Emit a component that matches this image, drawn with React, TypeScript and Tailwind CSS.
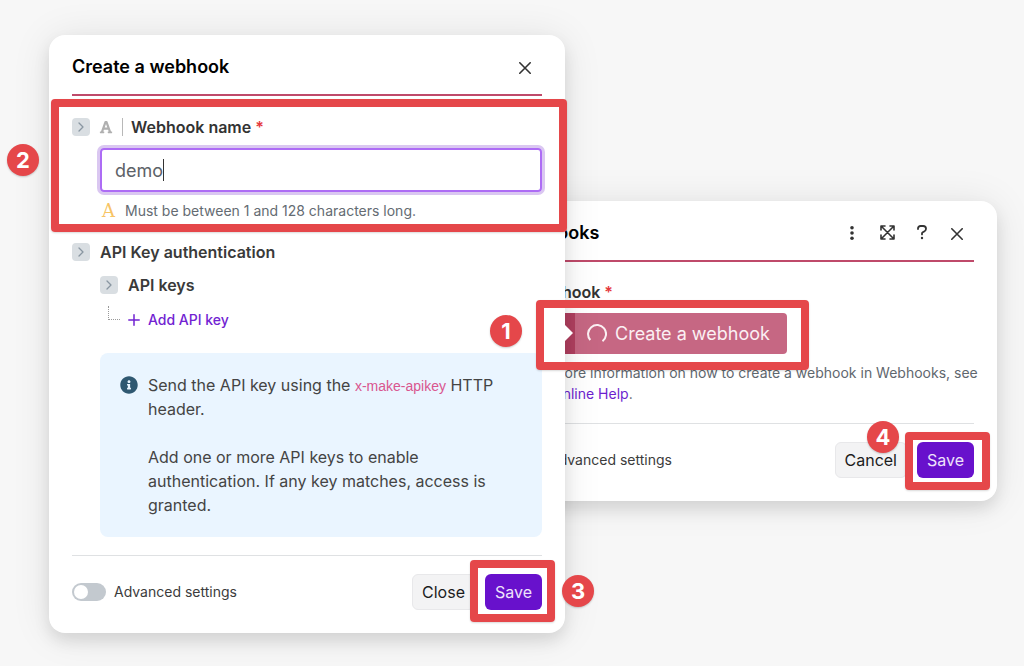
import { ReactNode, useState } from 'react';
import { FaFont, FaInfoCircle } from 'react-icons/fa';

function IconButton({ label, children }: { label: string; children: ReactNode }) {
  return (
    <button type="button" aria-label={label} className="flex size-5 items-center justify-center text-[#333]">
      {children}
    </button>
  );
}

function CloseIcon() {
  return (
    <svg viewBox="0 0 12 12" className="mt-0.5 size-3" fill="none" stroke="currentColor" strokeWidth="1.6" strokeLinecap="round">
      <path d="M.8.8l10.4 10.4M11.2.8L.8 11.2" />
    </svg>
  );
}

function MoreIcon() {
  return (
    <svg viewBox="0 0 4 14" className="h-3.5 w-1" fill="currentColor">
      <circle cx="2" cy="1.8" r="1.8" />
      <circle cx="2" cy="7" r="1.8" />
      <circle cx="2" cy="12.2" r="1.8" />
    </svg>
  );
}

function ExpandIcon() {
  return (
    <svg viewBox="0 0 15 15" className="size-[15px]" fill="none" stroke="currentColor" strokeWidth="1.6" strokeLinecap="round" strokeLinejoin="round">
      <path d="M1 5V1h4M10 1h4v4M14 10v4h-4M5 14H1v-4M1.3 1.3l12.4 12.4M13.7 1.3L1.3 13.7" />
    </svg>
  );
}

function HelpIcon() {
  return (
    <svg viewBox="0 0 10 15" className="h-[15px] w-2.5" fill="none" stroke="currentColor" strokeWidth="1.8" strokeLinecap="round">
      <path d="M1 4V3.4C1 2 2.1 1 3.5 1h2.6C7.7 1 9 2.2 9 3.8c0 1-.5 1.9-1.4 2.4L5.8 7.3c-.5.3-.8.7-.8 1.2v.9" />
      <circle cx="5" cy="13" r="1.2" fill="currentColor" stroke="none" />
    </svg>
  );
}

function Toggle({ label }: { label: string }) {
  return (
    <button type="button" aria-label={label} className="flex size-[18px] shrink-0 items-center justify-center rounded bg-[#d9dee2] text-[#8996a1]">
      <svg viewBox="0 0 6 10" className="h-2.5 w-1.5" fill="none" stroke="currentColor" strokeWidth="1.3" strokeLinecap="round" strokeLinejoin="round">
        <path d="M1 1l4 4-4 4" />
      </svg>
    </button>
  );
}

function Header({ title, children }: { title: string; children: ReactNode }) {
  return (
    <header className="flex h-[61px] items-center justify-between border-b-2 border-[#bf4a6a] pt-1 pr-[7px]">
      <h2 className="text-lg font-semibold text-black">{title}</h2>
      <div className="flex items-center gap-[15px]">{children}</div>
    </header>
  );
}

function Footer({ id, cancel }: { id: string; cancel: string }) {
  return (
    <footer className="flex items-center justify-between border-t border-[#dfe1e3] pt-[18px] pb-[23px]">
      <label htmlFor={id} className="flex items-center gap-2 text-sm text-[#3c3c3c]">
        <input
          id={id}
          type="checkbox"
          role="switch"
          className="h-[18px] w-[34px] appearance-none rounded-full bg-[#c3c9cf] p-0.5 before:block before:size-3.5 before:rounded-full before:bg-white checked:bg-[#6a11cb] checked:before:ml-4"
        />
        Advanced settings
      </label>
      <div className="flex gap-2.5 text-base">
        <button type="button" className="h-9 rounded-md border border-[#e8e8ea] bg-[#f3f3f4] px-[9px] text-[#1c1c1c]">
          {cancel}
        </button>
        <button type="button" className="h-9 rounded-md bg-[#6811cc] px-2.5 text-[#eee2fb]">
          Save
        </button>
      </div>
    </footer>
  );
}

const dialog = 'absolute rounded-2xl bg-white px-[23px] shadow-[0_2px_40px_rgba(0,0,0,0.09),0_8px_16px_rgba(0,0,0,0.1)]';

function WebhooksDialog() {
  return (
    <section aria-label="Webhooks" className={`${dialog} top-[201px] left-[484px] w-[513px]`}>
      <Header title="Webhooks">
        <IconButton label="More"><MoreIcon /></IconButton>
        <IconButton label="Expand"><ExpandIcon /></IconButton>
        <IconButton label="Help"><HelpIcon /></IconButton>
        <IconButton label="Close"><CloseIcon /></IconButton>
      </Header>

      <div className="pt-[18px] pb-[19px] pl-5">
        <h3 className="text-base font-semibold text-[#333]">
          Webhook<span className="ml-1 text-[#e5393d]">*</span>
        </h3>
        <div className="mt-[9px] flex h-[41px] w-[260px] overflow-hidden rounded bg-[#c66783]">
          <div className="w-12 bg-[#b03f5f]" />
          <button type="button" className="flex flex-1 items-center gap-2 pl-3 text-lg text-[#fbf0f3]">
            <svg viewBox="0 0 20 20" className="size-5" fill="none" stroke="currentColor" strokeWidth="2">
              <path d="M3.3 16A9 9 0 1 1 15.5 17.2" />
            </svg>
            Create a webhook
          </button>
        </div>
        <p className="mt-2 text-sm leading-[21px] whitespace-nowrap text-[#5f676e]">
          For more information on how to create a webhook in Webhooks, see
          <br />
          the <a href="#help" className="text-[#6d1fcf]">Online Help</a>.
        </p>
      </div>

      <Footer id="webhooks-advanced" cancel="Cancel" />
    </section>
  );
}

function CreateWebhookDialog() {
  const [name, setName] = useState('demo');

  return (
    <section aria-label="Create a webhook" className={`${dialog} top-[35px] left-[49px] w-[516px]`}>
      <Header title="Create a webhook">
        <IconButton label="Close"><CloseIcon /></IconButton>
      </Header>

      <div className="pt-[19px] pb-[18px]">
        <div className="flex items-center">
          <Toggle label="Webhook name options" />
          <FaFont className="ml-[9px] size-3.5 text-[#b0b0b0]" />
          <span className="ml-[9px] h-[18px] w-px bg-[#b8b8b8]" />
          <label htmlFor="webhook-name" className="ml-2 text-base font-semibold text-[#333]">
            Webhook name<span className="ml-1 text-[#e5393d]">*</span>
          </label>
        </div>
        <div className="relative mt-[9px] ml-7">
          <input
            id="webhook-name"
            type="text"
            value={name}
            onChange={(e) => setName(e.target.value)}
            className="h-11 w-full rounded border-2 border-[#ad6cf5] px-[13px] text-lg text-[#5c6268] caret-transparent ring-3 ring-[#dac7f1] outline-none"
          />
          <span className="absolute top-[11px] left-[63px] h-[22px] w-px bg-[#333]" />
        </div>
        <p className="mt-[9px] ml-[30px] flex items-center gap-2.5 text-sm text-[#646b72]">
          <span aria-hidden="true" className="font-['DejaVu_Serif'] text-lg leading-5 text-[#f7c465]">A</span>
          Must be between 1 and 128 characters long.
        </p>

        <h3 className="mt-[19px] flex items-center gap-[10px] text-base font-semibold text-[#3a3a3a]">
          <Toggle label="API Key authentication" />
          API Key authentication
        </h3>
        <h4 className="mt-[9px] ml-7 flex items-center gap-[10px] text-base font-semibold text-[#3a3a3a]">
          <Toggle label="API keys" />
          API keys
        </h4>
        <div className="mt-[9px] ml-9 flex items-start">
          <span className="h-3.5 w-3 border-b border-l border-dotted border-[#999]" />
          <button type="button" className="mt-1 ml-2 flex items-center gap-2 text-sm font-medium text-[#7223d2]">
            <svg viewBox="0 0 12 12" className="size-3" fill="none" stroke="currentColor" strokeWidth="1.5" strokeLinecap="round">
              <path d="M6 .8v10.4M.8 6h10.4" />
            </svg>
            Add API key
          </button>
        </div>

        <div className="mt-[23px] ml-7 flex gap-[10px] rounded-lg bg-[#eaf5ff] px-5 py-5 text-base text-[#444]">
          <FaInfoCircle className="mt-[3px] size-[18px] shrink-0 text-[#2f5871]" />
          <div>
            <p>
              Send the API key using the <code className="font-['Liberation_Sans'] text-sm text-[#d9568f]">x-make-apikey</code> HTTP
              <br />
              header.
            </p>
            <p className="mt-6">
              Add one or more API keys to enable authentication. If any key matches, access is granted.
            </p>
          </div>
        </div>
      </div>

      <Footer id="create-advanced" cancel="Close" />

      {/* Arrow that points at the button which opened the dialog */}
      <svg viewBox="0 0 8 16" className="absolute top-[290px] left-full h-4 w-2 text-white" fill="currentColor">
        <path d="M0 0l8 8-8 8z" />
      </svg>
    </section>
  );
}

const frame = 'absolute rounded border-8 border-[#e5474a] shadow-[0_1px_2px_rgba(0,0,0,0.15)]';
const badge = 'absolute flex size-8 items-center justify-center rounded-full bg-[#e5474a] text-[22px] font-bold text-white shadow-[0_1px_2px_rgba(0,0,0,0.2)]';

function Annotations() {
  return (
    <div className="pointer-events-none absolute inset-0">
      <div className={`${frame} top-[300px] left-[536px] h-[70px] w-[273px]`} />
      <div className={`${frame} top-[99px] left-[51px] h-[133px] w-[516px]`} />
      <div className={`${frame} top-[560px] left-[470px] h-[62px] w-[85px]`} />
      <div className={`${frame} top-[432px] left-[905px] h-[58px] w-[85px]`} />
      <span className={`${badge} top-[315px] left-[490px]`}>1</span>
      <span className={`${badge} top-[144px] left-[7px]`}>2</span>
      <span className={`${badge} top-[575px] left-[562px]`}>3</span>
      <span className={`${badge} top-[421px] left-[867px]`}>4</span>
    </div>
  );
}

export default function App() {
  return (
    <main className="relative min-h-screen overflow-hidden bg-[#f7f7f7] font-['Inter',sans-serif]">
      <WebhooksDialog />
      <CreateWebhookDialog />
      <Annotations />
    </main>
  );
}
